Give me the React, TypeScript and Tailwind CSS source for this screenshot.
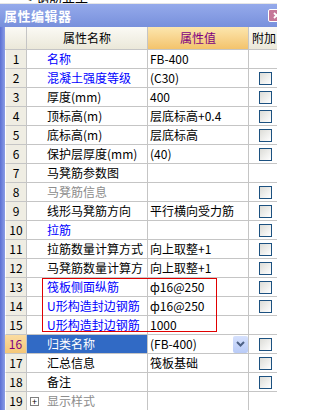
import React from 'react';

type Row = {
  name: string;
  value?: string;
  tone?: 'blue' | 'gray' | 'black';
  check?: boolean;
  selected?: boolean;
  dropdown?: boolean;
  expander?: boolean;
};

const rows: Row[] = [
  { name: '名称', value: 'FB-400', tone: 'blue' },
  { name: '混凝土强度等级', value: '(C30)', tone: 'blue', check: true },
  { name: '厚度(mm)', value: '400', check: true },
  { name: '顶标高(m)', value: '层底标高+0.4', check: true },
  { name: '底标高(m)', value: '层底标高', check: true },
  { name: '保护层厚度(mm)', value: '(40)', check: true },
  { name: '马凳筋参数图' },
  { name: '马凳筋信息', tone: 'gray', check: true },
  { name: '线形马凳筋方向', value: '平行横向受力筋', check: true },
  { name: '拉筋', tone: 'blue', check: true },
  { name: '拉筋数量计算方式', value: '向上取整+1', check: true },
  { name: '马凳筋数量计算方', value: '向上取整+1', check: true },
  { name: '筏板侧面纵筋', value: 'ф16@250', tone: 'blue', check: true },
  { name: 'U形构造封边钢筋', value: 'ф16@250', tone: 'blue', check: true },
  { name: 'U形构造封边钢筋', value: '1000', tone: 'blue' },
  { name: '归类名称', value: '(FB-400)', selected: true, dropdown: true, check: true },
  { name: '汇总信息', value: '筏板基础', check: true },
  { name: '备注', check: true },
  { name: '显示样式', tone: 'gray', expander: true },
];

const font = { fontFamily: '"Noto Sans CJK SC", "Liberation Sans", sans-serif' };

function Checkbox() {
  return (
    <div className="w-[13px] h-[13px] border border-[#1c5180] bg-gradient-to-br from-[#dcdcd7] to-white" />
  );
}

function DropButton() {
  return (
    <div className="w-[15px] h-[17px] rounded-[2px] bg-gradient-to-b from-[#d6e1fd] to-[#b9cbf7] flex items-center justify-center">
      <svg width="9" height="6" viewBox="0 0 9 6">
        <path d="M1 1l3.5 3.5L8 1" fill="none" stroke="#4d6185" strokeWidth="2" />
      </svg>
    </div>
  );
}

export default function App() {
  return (
    <div
      className="w-[277px] h-[410px] overflow-hidden bg-white text-[12px] leading-none"
      style={font}
    >
      {/* strip of the panel above */}
      <div className="h-[4px] bg-white overflow-hidden flex items-end pl-[22px] border-b border-[#e6e6e6]">
        <span className="text-[13px] leading-[13px] text-black whitespace-nowrap">✎ 钢筋业土</span>
      </div>

      {/* Title bar */}
      <div className="h-[23px] flex items-center bg-gradient-to-b from-[#95aaeb] to-[#7890dc]">
        <span className="pl-[4px] text-white font-bold text-[13px] tracking-[0.5px]">属性编辑器</span>
        <div className="ml-auto -mr-[8px] w-[17px] h-[13px] rounded-[2px] border border-white bg-[#c57798] flex items-center justify-center">
          <svg width="7" height="7" viewBox="0 0 7 7">
            <path d="M1 1l5 5M6 1L1 6" stroke="white" strokeWidth="1.8" />
          </svg>
        </div>
      </div>

      <div className="flex">
        {/* Window frame */}
        <div className="w-[5px] shrink-0 bg-gradient-to-r from-[#5b6fd3] to-[#8b9de6]" />

        <div className="relative flex-1">
          {/* Header */}
          <div className="grid grid-cols-[22px_121px_101px_1fr] h-[23px]">
            <div className="border-r border-b border-[#c5c5c5] bg-gradient-to-b from-[#fbfaf5] to-[#ebe8d9]" />
            <div className="border-r border-b border-[#c5c5c5] bg-gradient-to-b from-[#fbfaf5] to-[#ebe8d9] flex items-center justify-center text-black">
              属性名称
            </div>
            <div className="border-r border-b border-[#c5c5c5] bg-gradient-to-b from-[#fce6ae] to-[#f3c36b] flex items-center justify-center text-[#800080]">
              属性值
            </div>
            <div className="border-b border-[#c5c5c5] bg-gradient-to-b from-[#fbfaf5] to-[#ebe8d9] flex items-center pl-[3px] whitespace-nowrap overflow-hidden">
              附加
            </div>
          </div>

          {/* Rows */}
          {rows.map((r, i) => {
            const textColor = r.selected
              ? 'text-white'
              : r.tone === 'blue'
              ? 'text-[#0000ff]'
              : r.tone === 'gray'
              ? 'text-[#8c8c8c]'
              : 'text-black';
            return (
              <div key={i} className="grid grid-cols-[22px_121px_101px_1fr] h-[19px]">
                <div
                  className={
                    r.selected
                      ? 'border-r border-b border-[#c5c5c5] bg-gradient-to-b from-[#fbdca0] to-[#f5c778] flex items-center justify-center text-[#800080]'
                      : 'border-r border-b border-[#c5c5c5] border-l border-l-white bg-[#efede3] flex items-center justify-center text-black'
                  }
                >
                  {i + 1}
                </div>
                <div
                  className={
                    'border-r border-b border-[#c5c5c5] flex items-center whitespace-nowrap overflow-hidden ' +
                    (r.selected ? 'bg-[#316ac5] ' : '') +
                    textColor
                  }
                >
                  {r.expander ? (
                    <div className="ml-[3px] mr-[8px] w-[9px] h-[9px] border border-[#7f7f7f] bg-white flex items-center justify-center text-black text-[9px] leading-none">
                      +
                    </div>
                  ) : (
                    <div className="w-[20px] shrink-0" />
                  )}
                  {r.name}
                </div>
                <div className="border-r border-b border-[#c5c5c5] flex items-center pl-[2px] text-black whitespace-nowrap overflow-hidden">
                  <span className="flex-1">{r.value}</span>
                  {r.dropdown && <DropButton />}
                </div>
                <div className="border-b border-[#c5c5c5] flex items-center pl-[10px]">
                  {r.check && <Checkbox />}
                </div>
              </div>
            );
          })}

          {/* Red highlight annotation */}
          <div className="absolute left-[37px] top-[251px] w-[175px] h-[54px] border border-[#e00000] pointer-events-none" />
        </div>
      </div>
    </div>
  );
}
